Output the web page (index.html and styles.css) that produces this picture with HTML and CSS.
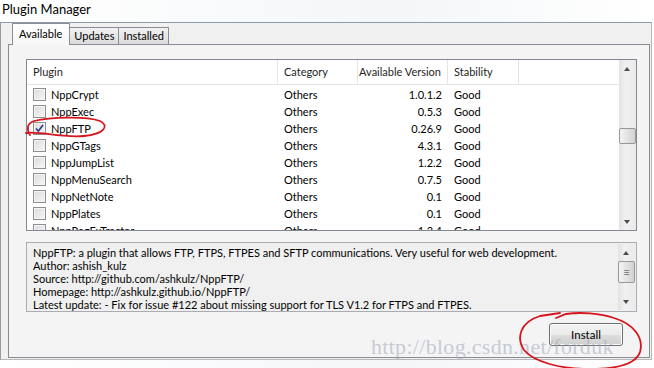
FILE: index.html
```html
<!DOCTYPE html>
<html lang="en">
  <head>
    <meta charset="UTF-8" />
    <meta name="viewport" content="width=device-width, initial-scale=1.0" />
    <title>Plugin Manager</title>
    <link rel="stylesheet" href="styles.css">
  </head>
  <body>
    <div class="title">Plugin Manager</div>
    <div class="window">
      <div class="tabs">
        <div class="tab active">Available</div>
        <div class="tab">Updates</div>
        <div class="tab">Installed</div>
      </div>

      <div class="panel">
        <div class="list">
          <div class="list-main">
            <div class="row head">
              <div class="cell">Plugin</div>
              <div class="cell">Category</div>
              <div class="cell num">Available Version</div>
              <div class="cell">Stability</div>
              <div class="cell last"></div>
            </div>
            <div class="rows">
              <div class="row"><div class="cell"><span class="check"></span>NppCrypt</div><div class="cell">Others</div><div class="cell num">1.0.1.2</div><div class="cell">Good</div></div>
              <div class="row"><div class="cell"><span class="check"></span>NppExec</div><div class="cell">Others</div><div class="cell num">0.5.3</div><div class="cell">Good</div></div>
              <div class="row"><div class="cell"><span class="check on"><svg width="11" height="11" viewBox="0 0 11 11"><path d="M2 5.5 L4.3 8.2 L9 2" /></svg></span>NppFTP</div><div class="cell">Others</div><div class="cell num">0.26.9</div><div class="cell">Good</div></div>
              <div class="row"><div class="cell"><span class="check"></span>NppGTags</div><div class="cell">Others</div><div class="cell num">4.3.1</div><div class="cell">Good</div></div>
              <div class="row"><div class="cell"><span class="check"></span>NppJumpList</div><div class="cell">Others</div><div class="cell num">1.2.2</div><div class="cell">Good</div></div>
              <div class="row"><div class="cell"><span class="check"></span>NppMenuSearch</div><div class="cell">Others</div><div class="cell num">0.7.5</div><div class="cell">Good</div></div>
              <div class="row"><div class="cell"><span class="check"></span>NppNetNote</div><div class="cell">Others</div><div class="cell num">0.1</div><div class="cell">Good</div></div>
              <div class="row"><div class="cell"><span class="check"></span>NppPlates</div><div class="cell">Others</div><div class="cell num">0.1</div><div class="cell">Good</div></div>
              <div class="row"><div class="cell"><span class="check"></span>NppRegExTractor</div><div class="cell">Others</div><div class="cell num">1.3.4</div><div class="cell">Good</div></div>
            </div>
          </div>
          <div class="vscroll">
            <div class="arrow up"></div>
            <div class="track list-track"><div class="thumb"></div></div>
            <div class="arrow down"></div>
          </div>
        </div>

        <div class="desc">
          <div class="desc-text">
            <div>NppFTP: a plugin that allows FTP, FTPS, FTPES and SFTP communications. Very useful for web development.</div>
            <div>Author: ashish_kulz</div>
            <div>Source: http://github.com/ashkulz/NppFTP/</div>
            <div>Homepage: http://ashkulz.github.io/NppFTP/</div>
            <div>Latest update: - Fix for issue #122 about missing support for TLS V1.2 for FTPS and FTPES.</div>
          </div>
          <div class="vscroll">
            <div class="arrow up"></div>
            <div class="track desc-track"><div class="thumb grip">&#8801;</div></div>
            <div class="arrow down"></div>
          </div>
        </div>

        <div class="actions">
          <button class="btn">Install</button>
        </div>
      </div>
    </div>

    <div class="watermark">http://blog.csdn.net/forduk</div>

    <svg class="marks" width="654" height="368" viewBox="0 0 654 368">
      <path d="M26 133 C40 131 60 138 84 136 C104 134 110 126 100 121 C86 116 50 117 34 121 C26 124 27 130 30 135" />
      <path d="M556 318 L566 314 C580 312 600 313 614 318 C634 324 644 338 640 352 C636 364 616 369 590 369 C560 369 534 362 524 350 C516 338 520 322 540 316 L560 313" />
    </svg>
  </body>
</html>
```

FILE: styles.css
```css
body {
  margin: 0;
  width: 654px;
  height: 368px;
  overflow: hidden;
  background: linear-gradient(90deg, #ffffff, #f4f6f8 60%, #ffffff);
  font-family: Lato, "Noto Sans", sans-serif;
  font-size: 11px;
  color: #000;
  position: relative;
}

.title {
  height: 22px;
  line-height: 18px;
  padding-left: 2px;
  font-size: 13px;
  box-sizing: border-box;
}

.window {
  width: 652px;
  height: 338px;
  box-sizing: border-box;
  background: #f0f0f0;
  border-top: 1px solid #8d9dac;
  border-left: 1px solid #9a9a9a;
  border-right: 1px solid #b8b8b8;
  border-bottom: 1px solid #b8b8b8;
  padding: 0 0 0 7px;
}

.tabs {
  display: flex;
  align-items: flex-end;
  height: 21px;
  padding-left: 4px;
  position: relative;
  z-index: 1;
}

.tab {
  height: 17px;
  line-height: 15px;
  padding: 0 4px;
  box-sizing: border-box;
  border: 1px solid #898c95;
  border-bottom: none;
  background: linear-gradient(#f2f2f2, #dcdcdc);
  margin-right: -1px;
}

.tab.active {
  height: 22px;
  margin-bottom: -1px;
  line-height: 20px;
  padding: 0 7px 0 6px;
  background: linear-gradient(#ffffff, #f6f6f6);
}

.panel {
  width: 642px;
  height: 314px;
  box-sizing: border-box;
  border: 1px solid #898c95;
  background: #f4f4f4;
  padding: 14px 0 0 17px;
}

.list {
  display: flex;
  width: 611px;
  height: 172px;
  box-sizing: border-box;
  border: 1px solid #828790;
  background: #fff;
}

.list-main {
  flex: 1;
  overflow: hidden;
}

.row {
  display: grid;
  grid-template-columns: 251px 80px 90px 71px 1fr;
  height: 17px;
  line-height: 17px;
}

.row.head {
  height: 25px;
  line-height: 24px;
  border-bottom: 1px solid #e5e5e5;
  box-sizing: border-box;
  color: #1e1e1e;
}

.head .cell {
  border-right: 1px solid #e5e5e5;
}

.head .cell.last {
  border-right: none;
}

.cell {
  padding: 0 6px;
  white-space: nowrap;
  display: flex;
  align-items: center;
}

.cell.num {
  justify-content: flex-end;
}

.rows {
  padding-top: 1px;
}

.check {
  width: 13px;
  height: 13px;
  box-sizing: border-box;
  border: 1px solid #8f8f8f;
  background: linear-gradient(135deg, #dcdcdc, #f6f6f6);
  box-shadow: inset 0 0 0 1px #f4f4f4;
  margin-right: 5px;
  display: flex;
}

.check svg path {
  fill: none;
  stroke: #2b3f86;
  stroke-width: 1.7;
}

.vscroll {
  width: 17px;
  display: flex;
  flex-direction: column;
  background: linear-gradient(90deg, #e3e3e3, #f0f0f0 40%, #eaeaea);
}

.arrow {
  height: 17px;
  position: relative;
}

.arrow::after {
  content: "";
  position: absolute;
  left: 5px;
  border-left: 3.5px solid transparent;
  border-right: 3.5px solid transparent;
}

.arrow.up::after {
  top: 7px;
  border-bottom: 4px solid #4d4d4d;
}

.arrow.down::after {
  top: 7px;
  border-top: 4px solid #4d4d4d;
}

.track {
  flex: 1;
  position: relative;
}

.thumb {
  position: absolute;
  left: 0;
  width: 15px;
  border: 1px solid #979797;
  border-radius: 2px;
  background: linear-gradient(90deg, #f4f4f4, #e2e2e2 50%, #d2d2d2);
  box-sizing: content-box;
}

.list-track .thumb {
  top: 51px;
  height: 14px;
}

.desc-track .thumb {
  top: 0;
  height: 20px;
  font-size: 11px;
  line-height: 19px;
  text-align: center;
  color: #6d6d6d;
}

.desc {
  display: flex;
  width: 611px;
  height: 70px;
  margin-top: 11px;
  box-sizing: border-box;
  border: 1px solid #a9acb3;
  background: #f0f0f0;
}

.desc .vscroll {
  margin: 1px 1px 1px 0;
}

.desc-text {
  flex: 1;
  padding: 3px 0 0 6px;
  line-height: 13px;
  white-space: nowrap;
  overflow: hidden;
}

.actions {
  display: flex;
  justify-content: flex-end;
  width: 611px;
  padding-top: 11px;
}

.btn {
  width: 74px;
  height: 23px;
  margin-right: 14px;
  border: 1px solid #707070;
  border-radius: 3px;
  background: linear-gradient(#f2f2f2 0%, #ebebeb 50%, #dddddd 51%, #cfcfcf 100%);
  box-shadow: inset 0 0 0 1px #fcfcfc;
  font-family: Lato, "Noto Sans", sans-serif;
  font-size: 11.5px;
  color: #000;
  padding: 0;
}

.watermark {
  position: absolute;
  left: 371px;
  top: 334px;
  font-family: "Liberation Serif", serif;
  font-size: 22px;
  color: rgba(160, 165, 185, 0.55);
  letter-spacing: 0.3px;
  pointer-events: none;
}

.marks {
  position: absolute;
  left: 0;
  top: 0;
  pointer-events: none;
}

.marks path {
  fill: none;
  stroke: #d6141c;
  stroke-width: 1.8;
  stroke-linecap: round;
}
```
